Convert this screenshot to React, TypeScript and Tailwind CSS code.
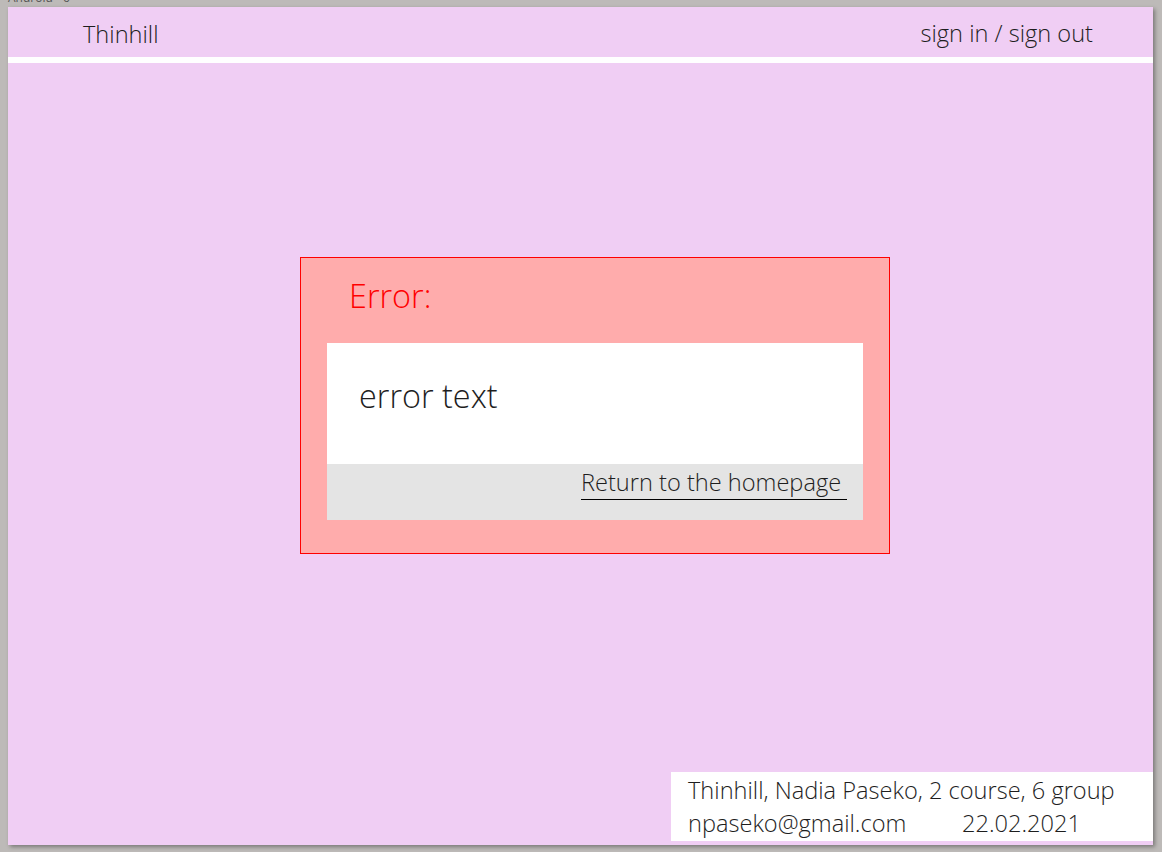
export default function App() {
  return (
    <div className="min-h-[852px] w-full bg-[#bdbab8] font-['Open_Sans',sans-serif] font-light">
      {/* frame label, mostly cut off by the top edge */}
      <div className="h-[7px] overflow-hidden pl-[8px]">
        <div className="-mt-[9px] text-[12px] leading-[14px] text-[#555] font-normal">Android - 6</div>
      </div>

      <div className="ml-[8px] flex h-[838px] w-[1145px] flex-col bg-[#f0cef4] shadow-[2px_2px_4px_rgba(0,0,0,0.35)]">
        {/* Header */}
        <header className="flex h-[50px] items-center justify-between pl-[75px] pr-[60px] text-[23.6px] text-[#1e1e1e]">
          <span className="pt-[6px]">Thinhill</span>
          <span className="pt-[3px]">sign in / sign out</span>
        </header>
        <div className="h-[6px] bg-white" />

        {/* Error card */}
        <div className="ml-[292px] mt-[194px] w-[590px] border border-[#ff0000] bg-[#ffacac]">
          <div className="h-[85px] pl-[48px] pt-[17px] text-[32.4px] leading-[40px] text-[#ff0000]">Error:</div>
          <div className="mx-[26px] mb-[33px]">
            <div className="h-[121px] bg-white pl-[32px] pt-[32px] text-[32.4px] leading-[40px] text-[#1e1e1e]">
              error text
            </div>
            <div className="flex h-[56px] justify-end bg-[#e4e4e4] pr-[16px] pt-[3px]">
              <a className="h-[33px] w-[266px] border-b-[1.5px] border-black text-[23.6px] leading-[30px] text-[#1e1e1e]">
                Return to the homepage
              </a>
            </div>
          </div>
        </div>

        {/* Footer */}
        <footer className="mb-[4px] mt-auto h-[69px] w-[482px] self-end bg-white pl-[17px] pt-[2px] text-[23.6px] leading-[33px] text-[#1e1e1e]">
          <div>Thinhill, Nadia Paseko, 2 course, 6 group</div>
          <div className="flex">
            <span className="w-[274px]">npaseko@gmail.com</span>
            <span>22.02.2021</span>
          </div>
        </footer>
      </div>
    </div>
  );
}
